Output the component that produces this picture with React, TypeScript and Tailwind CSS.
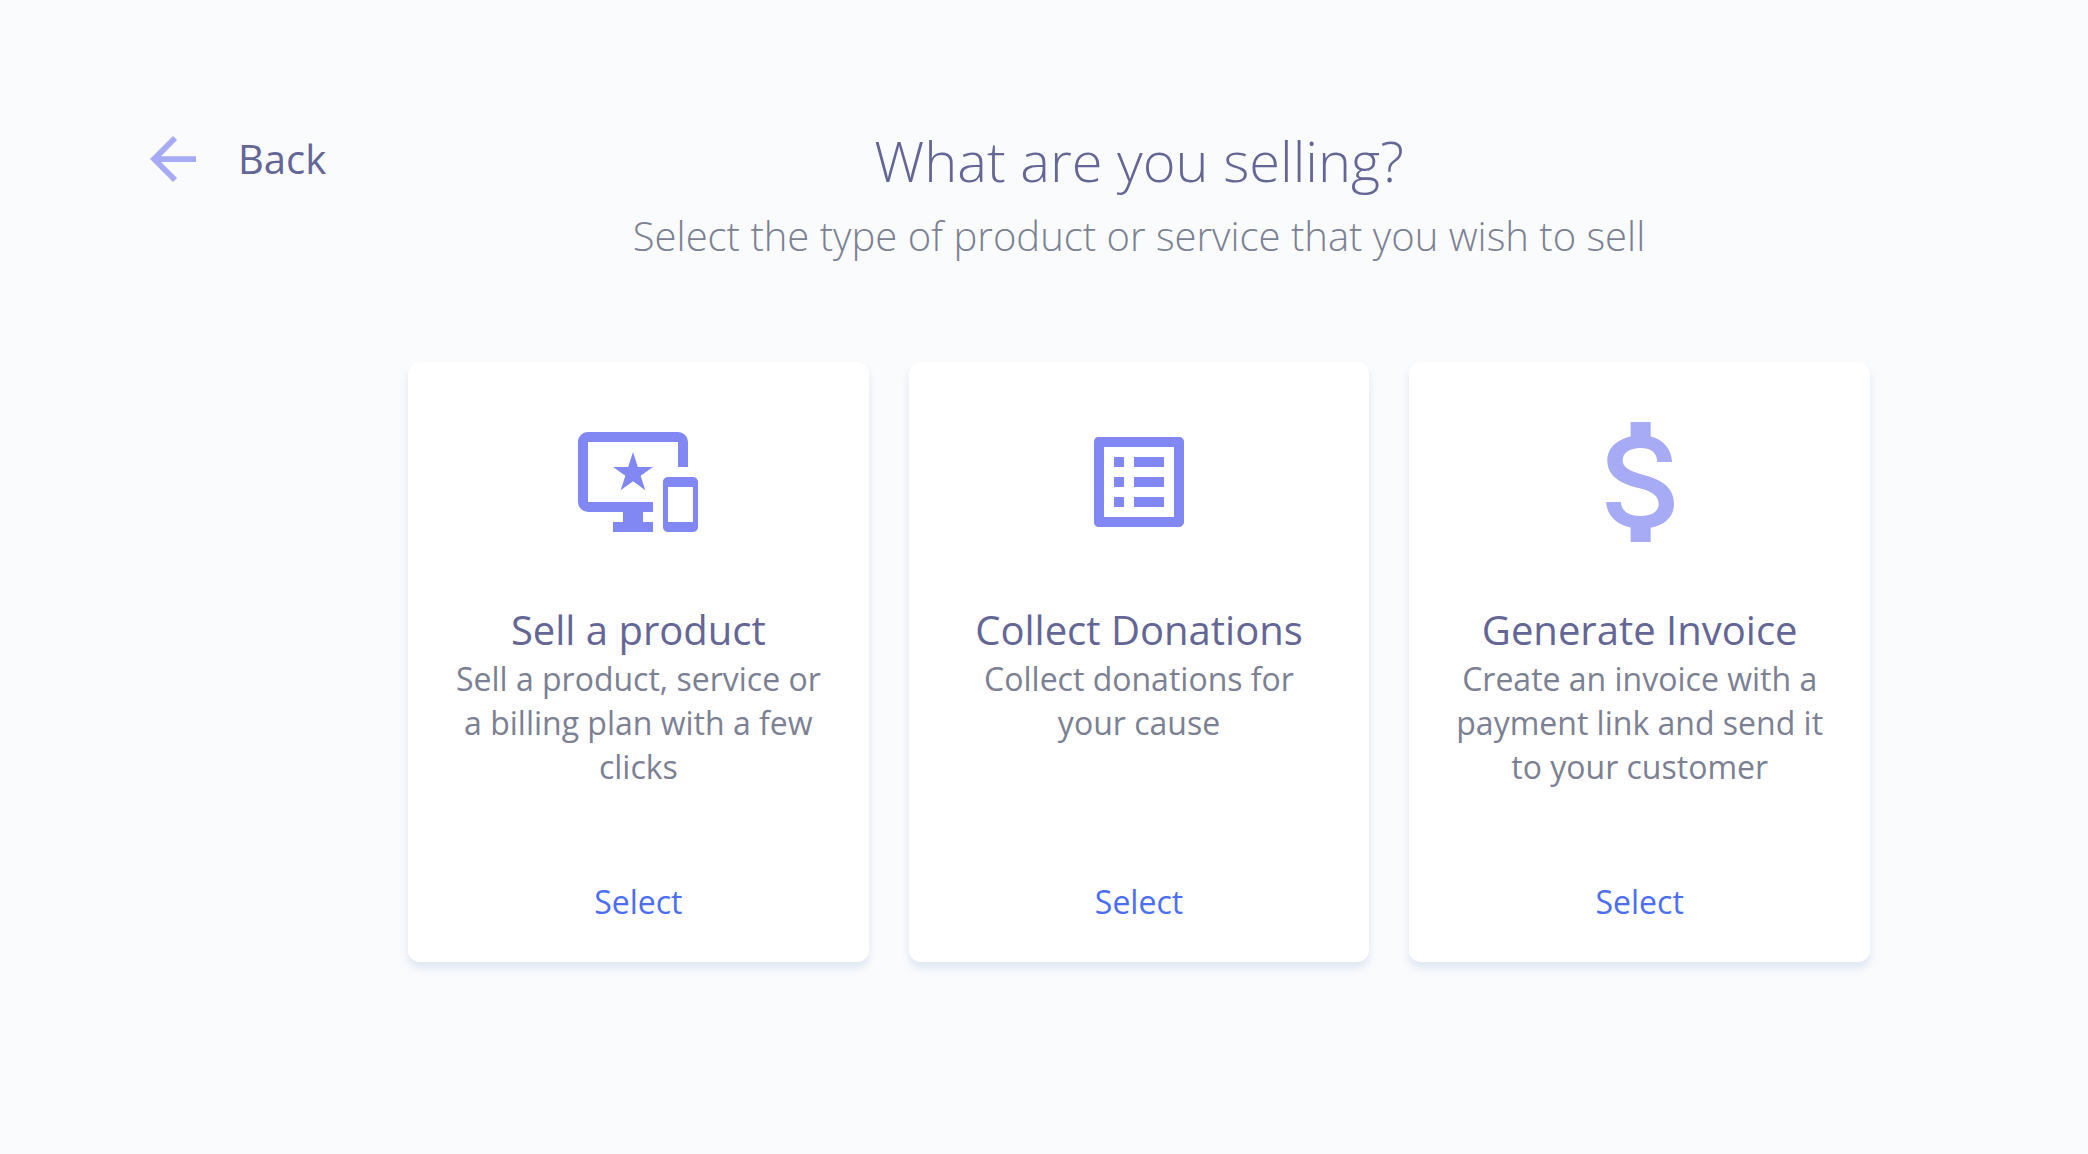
import React from 'react';
import { MdArrowBack, MdAttachMoney, MdImportantDevices, MdListAlt } from 'react-icons/md';
import type { IconType } from 'react-icons';

interface ProductType {
  id: string;
  title: string;
  description: string;
  icon: IconType;
  iconColor: string;
  viewBox?: string;
}

const productTypes: ProductType[] = [
  {
    id: 'product',
    title: 'Sell a product',
    description: 'Sell a product, service or a billing plan with a few clicks',
    icon: MdImportantDevices,
    iconColor: 'text-[#8187f3]',
  },
  {
    id: 'donations',
    title: 'Collect Donations',
    description: 'Collect donations for your cause',
    icon: MdListAlt,
    iconColor: 'text-[#8187f3]',
  },
  {
    id: 'invoice',
    title: 'Generate Invoice',
    description: 'Create an invoice with a payment link and send it to your customer',
    icon: MdAttachMoney,
    iconColor: 'text-[#a7aaf4]',
    // trimmed so the dollar sign fills the icon box
    viewBox: '2.4 3 18 18',
  },
];

const ProductCard: React.FC<{ item: ProductType }> = ({ item }) => {
  const Icon = item.icon;

  return (
    <article className="flex flex-col items-center min-h-[600px] px-10 pt-[60px] pb-[34px] bg-white rounded-xl shadow-[0_6px_8px_rgba(80,125,185,0.16)] text-center">
      <Icon viewBox={item.viewBox ?? '0 0 24 24'} className={`size-[120px] ${item.iconColor}`} />
      <h2 className="mt-[60px] text-[40px] leading-[55px] text-[#646696]">{item.title}</h2>
      <p className="text-[32px] leading-[44px] text-[#7b8193]">{item.description}</p>
      <button type="button" className="mt-auto px-4 py-1 text-[32px] leading-[44px] text-[#4c6ef5] cursor-pointer">
        Select
      </button>
    </article>
  );
};

const App: React.FC = () => {
  return (
    <div className="min-h-screen flex items-start bg-[#fafbfd] pt-[126px] pl-[150px] pr-[218px] font-['Open_Sans',sans-serif]">
      {/* Back navigation */}
      <button type="button" className="w-[258px] shrink-0 flex items-center gap-[42px] text-[#646696] cursor-pointer">
        <MdArrowBack viewBox="4 4 16 16" className="size-[46px] text-[#a7aaf4]" />
        <span className="text-[40px] leading-[66px]">Back</span>
      </button>

      <main className="flex-1 min-w-0">
        <header className="text-center font-light">
          <h1 className="text-[56px] leading-[68px] text-[#646696]">What are you selling?</h1>
          <p className="mt-3 text-[40px] leading-[60px] text-[#7b8193]">
            Select the type of product or service that you wish to sell
          </p>
        </header>

        {/* Product type cards */}
        <div className="grid grid-cols-3 gap-10 mt-24">
          {productTypes.map((item) => (
            <ProductCard key={item.id} item={item} />
          ))}
        </div>
      </main>
    </div>
  );
};

export default App;
